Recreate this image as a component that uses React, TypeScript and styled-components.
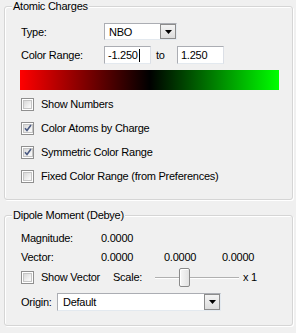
import React from 'react';
import styled, { createGlobalStyle } from 'styled-components';

const Global = createGlobalStyle`
  html, body { margin: 0; padding: 0; background: #f0f0f0; }
  body {
    font-family: "Liberation Sans", Arial, sans-serif;
    font-size: 11px;
    letter-spacing: -0.25px;
    color: #000;
  }
`;

const Page = styled.div`
  width: 296px;
  height: 333px;
  box-sizing: border-box;
  padding: 0 3px 0 4px;
  display: flex;
  flex-direction: column;
`;

const Group = styled.fieldset<{ $top?: number }>`
  margin: ${(p) => p.$top ?? 0}px 0 0 0;
  padding: 0;
  min-width: 0;
  border: 1px solid #d5d5d5;
  border-radius: 3px;
  box-shadow: inset 1px 1px 0 #fff, 1px 1px 0 #fff;
`;

const Legend = styled.legend`
  margin-left: 7px;
  padding: 0 1px;
  line-height: 13px;
  background: #f0f0f0;
`;

const Body = styled.div<{ $pt: number; $pb: number }>`
  display: flex;
  flex-direction: column;
  padding: ${(p) => p.$pt}px 0 ${(p) => p.$pb}px 15px;
`;

const Row = styled.div<{ $h: number; $mt?: number }>`
  display: flex;
  align-items: center;
  height: ${(p) => p.$h}px;
  margin-top: ${(p) => p.$mt ?? 0}px;
`;

const Label = styled.span<{ $w?: number; $ml?: number }>`
  display: inline-block;
  flex: none;
  width: ${(p) => (p.$w ? `${p.$w}px` : 'auto')};
  margin-left: ${(p) => p.$ml ?? 0}px;
  white-space: nowrap;
`;

const Combo = styled.div<{ $w: number; $h: number }>`
  display: flex;
  align-items: center;
  box-sizing: border-box;
  width: ${(p) => p.$w}px;
  height: ${(p) => p.$h}px;
  background: #fff;
  border: 1px solid #abadb3;
  border-right-color: #e3e9ef;
  border-bottom-color: #e3e9ef;
`;

const ComboText = styled.span<{ $pl: number }>`
  flex: 1;
  padding-left: ${(p) => p.$pl}px;
  white-space: nowrap;
`;

const DropBtn = styled.div`
  box-sizing: border-box;
  width: 16px;
  height: 100%;
  display: flex;
  align-items: center;
  justify-content: center;
  border: 1px solid #8c8c8c;
  background: linear-gradient(#f4f4f4, #dcdcdc);
`;

const TextBox = styled.div`
  box-sizing: border-box;
  width: 47px;
  height: 18px;
  display: flex;
  align-items: center;
  padding-left: 3px;
  background: #fff;
  border: 1px solid #abadb3;
  border-right-color: #dbdfe6;
  border-bottom-color: #e3e9ef;
`;

const Caret = styled.span`
  display: inline-block;
  width: 1px;
  height: 13px;
  background: #000;
  margin-left: 1px;
`;

const Gradient = styled.div`
  width: 259px;
  height: 20px;
  margin-top: 6px;
  margin-bottom: 2px;
  background: linear-gradient(to right, #ff0000 0%, #000000 50%, #00ff00 100%);
`;

const CheckBox = styled.span`
  box-sizing: border-box;
  flex: none;
  width: 13px;
  height: 13px;
  margin-left: 1px;
  margin-right: 7px;
  border: 1px solid #8f8f8f;
  background: #fff;
  padding: 1px;
  display: inline-flex;
`;

const CheckInner = styled.span`
  flex: 1;
  display: flex;
  align-items: center;
  justify-content: center;
  border: 1px solid #c4c4c4;
  background: linear-gradient(135deg, #d8d8d8, #f6f6f6 80%);
`;

const ValueGrid = styled.div`
  display: grid;
  grid-template-columns: 80px 63px 58px auto;
  grid-auto-rows: 19px;
  align-items: center;
  margin-left: 1px;
  margin-top: 6px;
`;

const Slider = styled.div`
  position: relative;
  flex: none;
  width: 84px;
  height: 19px;
  margin-right: 4px;
  &::before {
    content: '';
    position: absolute;
    left: 0;
    right: 0;
    top: 9px;
    height: 1px;
    background: #b0b0b0;
    border-bottom: 1px solid #fff;
  }
`;

const Thumb = styled.div`
  position: absolute;
  left: 24px;
  top: 0;
  box-sizing: border-box;
  width: 11px;
  height: 19px;
  border: 1px solid #8a8a8a;
  border-radius: 2px;
  background: linear-gradient(to right, #f7f7f7, #e2e2e2);
  box-shadow: inset 1px 1px 0 #fff;
`;

const Arrow = () => (
  <svg width="7" height="4" viewBox="0 0 7 4">
    <path d="M0 0H7L3.5 4Z" fill="#000" />
  </svg>
);

const Check: React.FC<{ checked?: boolean }> = ({ checked }) => (
  <CheckBox>
    <CheckInner>
      {checked && (
        <svg width="8" height="8" viewBox="0 0 8 8">
          <path d="M1 4.2L3 6.5L7 1" stroke="#4a5a82" strokeWidth="1.6" fill="none" />
        </svg>
      )}
    </CheckInner>
  </CheckBox>
);

const checks: { label: string; checked: boolean }[] = [
  { label: 'Show Numbers', checked: false },
  { label: 'Color Atoms by Charge', checked: true },
  { label: 'Symmetric Color Range', checked: true },
  { label: 'Fixed Color Range (from Preferences)', checked: false },
];

export default function App() {
  return (
    <Page>
      <Global />
      <Group>
        <Legend>Atomic Charges</Legend>
        <Body $pt={10} $pb={11}>
          <Row $h={17}>
            <Label $w={83} $ml={1}>Type:</Label>
            <Combo $w={73} $h={17}>
              <ComboText $pl={4}>NBO</ComboText>
              <DropBtn><Arrow /></DropBtn>
            </Combo>
          </Row>
          <Row $h={18} $mt={6}>
            <Label $w={83} $ml={1}>Color Range:</Label>
            <TextBox>-1.250<Caret /></TextBox>
            <Label $w={21} $ml={5}>to</Label>
            <TextBox>1.250</TextBox>
          </Row>
          <Gradient />
          {checks.map((c) => (
            <Row key={c.label} $h={24}>
              <Check checked={c.checked} />
              <Label>{c.label}</Label>
            </Row>
          ))}
        </Body>
      </Group>
      <Group $top={9}>
        <Legend>Dipole Moment (Debye)</Legend>
        <Body $pt={0} $pb={14}>
          <ValueGrid>
            <span>Magnitude:</span>
            <span>0.0000</span>
            <span />
            <span />
            <span>Vector:</span>
            <span>0.0000</span>
            <span>0.0000</span>
            <span>0.0000</span>
          </ValueGrid>
          <Row $h={20} $mt={1}>
            <Check />
            <Label $w={72}>Show Vector</Label>
            <Label $w={42}>Scale:</Label>
            <Slider><Thumb /></Slider>
            <Label>x 1</Label>
          </Row>
          <Row $h={18} $mt={6}>
            <Label $w={36} $ml={1}>Origin:</Label>
            <Combo $w={164} $h={18}>
              <ComboText $pl={5}>Default</ComboText>
              <DropBtn><Arrow /></DropBtn>
            </Combo>
          </Row>
        </Body>
      </Group>
    </Page>
  );
}
